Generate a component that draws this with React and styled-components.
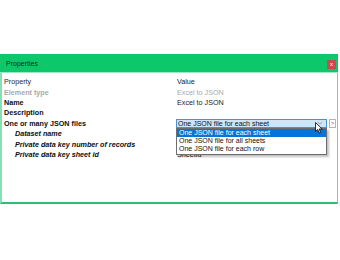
import styled, { createGlobalStyle } from "styled-components";

const GlobalStyle = createGlobalStyle`
  body {
    margin: 0;
    background: #ffffff;
    font-family: "Liberation Sans", Arial, sans-serif;
  }
`;

const rows = [
  { label: "Property", value: "Value", kind: "head" },
  { label: "Element type", value: "Excel to JSON", kind: "muted" },
  { label: "Name", value: "Excel to JSON", kind: "bold" },
  { label: "Description", value: "", kind: "bold" },
  { label: "One or many JSON files", value: null, kind: "bold", select: true },
  { label: "Dataset name", value: "", kind: "sub" },
  { label: "Private data key number of records", value: "", kind: "sub" },
  { label: "Private data key sheet id", value: "Sheetid", kind: "sub" },
];

const options = [
  "One JSON file for each sheet",
  "One JSON file for all sheets",
  "One JSON file for each row",
];

const App = () => {
  return (
    <Page>
      <GlobalStyle />
      <Window>
        <TitleBar>
          <Title>Properties</Title>
          <CloseButton>x</CloseButton>
        </TitleBar>
        <Body>
          {rows.map((row) => (
            <Row key={row.label}>
              <Label kind={row.kind}>{row.label}</Label>
              {row.select ? (
                <SelectCell>
                  <SelectWrap>
                    <SelectBox>
                      <span>{options[0]}</span>
                      <Chevron viewBox="0 0 8 5">
                        <path d="M1 1 L4 4 L7 1" fill="none" stroke="#8a8a8a" strokeWidth="1" />
                      </Chevron>
                    </SelectBox>
                    <OptionList>
                      {options.map((opt, i) => (
                        <Option key={opt} selected={i === 0}>
                          {opt}
                        </Option>
                      ))}
                    </OptionList>
                    <Cursor viewBox="0 0 8 12">
                      <path
                        d="M0.5 0.5 L0.5 9.5 L2.7 7.5 L4.2 11 L5.6 10.4 L4.2 7 L7.2 7 Z"
                        fill="#ffffff"
                        stroke="#000000"
                        strokeWidth="0.8"
                      />
                    </Cursor>
                  </SelectWrap>
                  <MoreButton>&gt;</MoreButton>
                </SelectCell>
              ) : (
                <Value kind={row.kind}>{row.value}</Value>
              )}
            </Row>
          ))}
        </Body>
      </Window>
    </Page>
  );
};

const Page = styled.div`
  padding-top: 54px;
  width: 340px;
  height: 260px;
  box-sizing: border-box;
`;

const Window = styled.div`
  width: 338px;
  height: 150px;
  box-sizing: border-box;
  border-left: 2px solid #86e0b4;
  border-right: 1px solid #7fcfa3;
  border-bottom: 2px solid #2fbd74;
  background: #ffffff;
  display: flex;
  flex-direction: column;
`;

const TitleBar = styled.div`
  height: 18px;
  margin-left: -2px;
  margin-right: -1px;
  background: #0cc86a;
  border-bottom: 1px solid #9fe6c2;
  display: flex;
  align-items: center;
  justify-content: space-between;
  padding: 0 2px 0 6px;
`;

const Title = styled.span`
  font-size: 7px;
  color: #1e2a22;
`;

const CloseButton = styled.div`
  width: 9px;
  height: 9px;
  margin-top: 3px;
  background: #d2474f;
  color: #ffffff;
  font-size: 6px;
  line-height: 8px;
  text-align: center;
`;

const Body = styled.div`
  padding: 3.5px 0 0 2px;
`;

const Row = styled.div`
  display: grid;
  grid-template-columns: 172px 1fr;
  height: 10.4px;
  align-items: center;
`;

const Label = styled.div`
  font-size: 7.2px;
  white-space: nowrap;
  padding-left: ${(p) => (p.kind === "sub" ? "11px" : "0")};
  font-weight: ${(p) => (p.kind === "head" ? "normal" : "bold")};
  font-style: ${(p) => (p.kind === "sub" ? "italic" : "normal")};
  color: ${(p) =>
    p.kind === "head" ? "#2a2a2a" : p.kind === "muted" ? "#a8a8a8" : "#0e0e0e"};
`;

const Value = styled.div`
  font-size: 7.2px;
  white-space: nowrap;
  padding-left: 1px;
  color: ${(p) => (p.kind === "muted" ? "#a8a8a8" : "#1a1a1a")};
`;

const SelectCell = styled.div`
  display: flex;
  align-items: center;
  gap: 2px;
`;

const SelectWrap = styled.div`
  position: relative;
  width: 151px;
`;

const SelectBox = styled.div`
  height: 9px;
  box-sizing: border-box;
  background: #cde5f7;
  border: 1px solid #4a90d9;
  display: flex;
  align-items: center;
  justify-content: space-between;
  padding: 0 3px 0 1px;
  font-size: 7px;
  color: #111111;
  white-space: nowrap;
`;

const Chevron = styled.svg`
  width: 6px;
  height: 4px;
`;

const OptionList = styled.div`
  position: absolute;
  top: 9px;
  left: 0;
  width: 151px;
  box-sizing: border-box;
  background: #ffffff;
  border: 1px solid #6e6e6e;
  box-shadow: 2px 2px 2px rgba(0, 0, 0, 0.25);
  z-index: 2;
`;

const Option = styled.div`
  height: 8.3px;
  line-height: 8.3px;
  font-size: 7px;
  padding-left: 2px;
  white-space: nowrap;
  background: ${(p) => (p.selected ? "#0a74d6" : "#ffffff")};
  color: ${(p) => (p.selected ? "#ffffff" : "#111111")};
`;

const Cursor = styled.svg`
  position: absolute;
  left: 139px;
  top: 3px;
  width: 8px;
  height: 12px;
  z-index: 3;
`;

const MoreButton = styled.div`
  width: 7px;
  height: 9px;
  box-sizing: border-box;
  border: 1px solid #b5b5b5;
  background: #ffffff;
  font-size: 6px;
  line-height: 7px;
  text-align: center;
  color: #555555;
`;

export default App;
